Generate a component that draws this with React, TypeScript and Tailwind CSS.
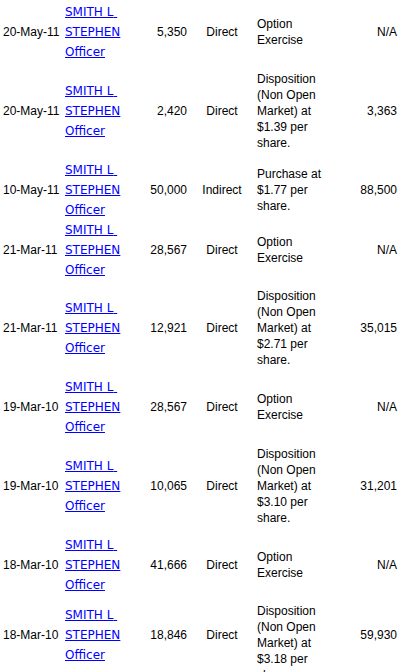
const rows = [
  { date: "20-May-11", shares: "5,350", kind: "Direct", tx: "Option Exercise", value: "N/A", disp: false },
  { date: "20-May-11", shares: "2,420", kind: "Direct", tx: "Disposition (Non Open Market) at $1.39 per share.", value: "3,363", disp: true },
  { date: "10-May-11", shares: "50,000", kind: "Indirect", tx: "Purchase at $1.77 per share.", value: "88,500", disp: false },
  { date: "21-Mar-11", shares: "28,567", kind: "Direct", tx: "Option Exercise", value: "N/A", disp: false },
  { date: "21-Mar-11", shares: "12,921", kind: "Direct", tx: "Disposition (Non Open Market) at $2.71 per share.", value: "35,015", disp: true },
  { date: "19-Mar-10", shares: "28,567", kind: "Direct", tx: "Option Exercise", value: "N/A", disp: false },
  { date: "19-Mar-10", shares: "10,065", kind: "Direct", tx: "Disposition (Non Open Market) at $3.10 per share.", value: "31,201", disp: true },
  { date: "18-Mar-10", shares: "41,666", kind: "Direct", tx: "Option Exercise", value: "N/A", disp: false },
  { date: "18-Mar-10", shares: "18,846", kind: "Direct", tx: "Disposition (Non Open Market) at $3.18 per share.", value: "59,930", disp: true },
];

function Row({ r, last }: any) {
  return (
    <div className={"flex items-center " + (last ? "h-[80px]" : "")}>
      <div className="w-[65px] pl-[3px]">{r.date}</div>
      <div className="w-[68px] font-['DejaVu_Sans',sans-serif] leading-[20px]">
        <a href="#" className="text-[#0000ff] underline">SMITH L{"\u00a0"}</a>
        <br />
        <a href="#" className="text-[#0000ff] underline">STEPHEN</a>
        <br />
        <a href="#" className="text-[#0000ff] underline">Officer</a>
      </div>
      <div className="w-[54px] text-right">{r.shares}</div>
      <div className="w-[70px] text-center">{r.kind}</div>
      <div
        className={
          "w-[72px] " +
          (last ? "self-start pt-[8px]" : r.disp ? "py-[8.75px]" : "")
        }
      >
        {r.tx}
      </div>
      <div className="w-[68px] text-right">{r.value}</div>
    </div>
  );
}

export default function App() {
  return (
    <div className="h-[672px] w-[401px] overflow-hidden bg-white pt-[2px] text-[12px] leading-[16px] text-black font-['Liberation_Sans',Arial,sans-serif]">
      {rows.map((r, i) => (
        <Row key={i} r={r} last={i === rows.length - 1} />
      ))}
    </div>
  );
}
